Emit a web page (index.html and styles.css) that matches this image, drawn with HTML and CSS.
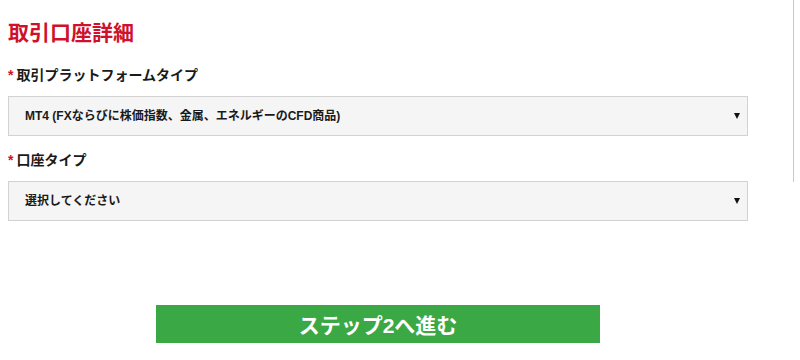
FILE: index.html
```html
<!DOCTYPE html>
<html lang="ja">
<head>
  <meta charset="UTF-8" />
  <title>取引口座詳細</title>
  <meta name="viewport" content="width=device-width, initial-scale=1.0" />
  <link rel="stylesheet" href="styles.css">
</head>
<body>
  <div class="page">
    <form class="account-form">
      <h1>取引口座詳細</h1>

      <label class="field-label" for="platform"><span class="req">*</span>取引プラットフォームタイプ</label>
      <div class="select-box">
        <select id="platform">
          <option>MT4 (FXならびに株価指数、金属、エネルギーのCFD商品)</option>
        </select>
      </div>

      <label class="field-label second" for="account-type"><span class="req">*</span>口座タイプ</label>
      <div class="select-box">
        <select id="account-type">
          <option>選択してください</option>
        </select>
      </div>

      <div class="actions">
        <button type="button" class="next-btn">ステップ2へ進む</button>
      </div>
    </form>

    <aside class="side"></aside>
  </div>
</body>
</html>
```

FILE: styles.css
```css
body {
  font-family: "Liberation Sans", "Noto Sans CJK JP", sans-serif;
  margin: 0;
  padding: 0;
  background-color: #fff;
  color: #222;
}
.page {
  display: flex;
  align-items: flex-start;
}
.account-form {
  width: 741px;
  margin-left: 8px;
}
h1 {
  margin: 0;
  padding-top: 18px;
  font-size: 21px;
  line-height: 30px;
  font-weight: bold;
  color: #d0112b;
}
.field-label {
  display: block;
  margin: 17px 0 11px;
  font-size: 14px;
  line-height: 20px;
  font-weight: bold;
  color: #1a1a1a;
}
.field-label.second {
  margin-top: 14px;
}
.req {
  color: #d0112b;
  margin-right: 3px;
}
.select-box {
  position: relative;
}
.select-box select {
  display: block;
  width: 100%;
  height: 40px;
  margin: 0;
  padding: 0 30px 0 16px;
  background-color: #f5f5f5;
  border: 1px solid #d2d2d2;
  border-radius: 0;
  font-family: "Liberation Sans", "Noto Sans CJK JP", sans-serif;
  font-size: 12px;
  font-weight: bold;
  color: #1a1a1a;
  appearance: none;
  -webkit-appearance: none;
}
.select-box::after {
  content: "";
  position: absolute;
  right: 8px;
  top: 17px;
  border-left: 3px solid transparent;
  border-right: 3px solid transparent;
  border-top: 6px solid #111;
  pointer-events: none;
}
.actions {
  display: flex;
  justify-content: center;
  margin-top: 84px;
}
.next-btn {
  width: 444px;
  height: 38px;
  padding: 0;
  background-color: #39a845;
  color: #fff;
  border: none;
  font-family: "Liberation Sans", "Noto Sans CJK JP", sans-serif;
  font-size: 21px;
  font-weight: bold;
  cursor: pointer;
}
.side {
  margin-left: 45px;
  width: 6px;
  height: 182px;
  border-left: 1px solid #c8c8c8;
}
```
